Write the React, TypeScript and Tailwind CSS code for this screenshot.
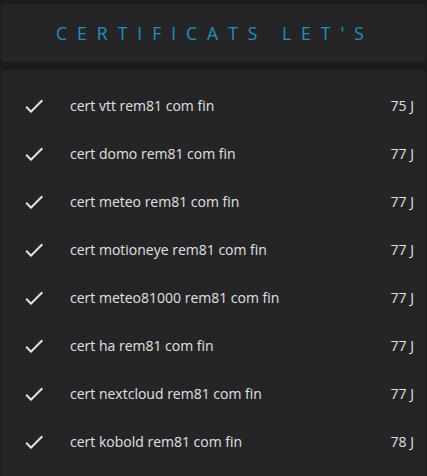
const certs = [
  { name: "cert vtt rem81 com fin", days: "75 J" },
  { name: "cert domo rem81 com fin", days: "77 J" },
  { name: "cert meteo rem81 com fin", days: "77 J" },
  { name: "cert motioneye rem81 com fin", days: "77 J" },
  { name: "cert meteo81000 rem81 com fin", days: "77 J" },
  { name: "cert ha rem81 com fin", days: "77 J" },
  { name: "cert nextcloud rem81 com fin", days: "77 J" },
  { name: "cert kobold rem81 com fin", days: "78 J" },
];

function CheckIcon() {
  return (
    <svg viewBox="0 0 24 24" width={24} height={24} className="shrink-0" aria-hidden="true">
      <path fill="#e6e6e6" d="M21,7L9,19L3.5,13.5L4.91,12.09L9,16.17L19.59,5.59L21,7Z" />
    </svg>
  );
}

export default function App() {
  return (
    <div className="h-[476px] overflow-hidden bg-[#1c1c1d] pt-1 pl-px pr-px font-['Open_Sans',sans-serif]">
      <div className="flex h-[58px] items-center justify-center rounded-sm bg-[#252527]">
        <h1 className="pl-[3px] text-[17.5px] tracking-[10px] text-[#2290bc]">CERTIFICATS LET'S</h1>
      </div>

      <div className="mt-2 rounded-sm bg-[#252527] pt-3 pr-3 pb-6 pl-[21px]">
        <ul>
          {certs.map((c) => (
            <li key={c.name} className="flex h-12 items-center text-sm text-[#e1e1e1]">
              <CheckIcon />
              <span className="ml-6 flex-1">{c.name}</span>
              <span>{c.days}</span>
            </li>
          ))}
        </ul>
      </div>
    </div>
  );
}
